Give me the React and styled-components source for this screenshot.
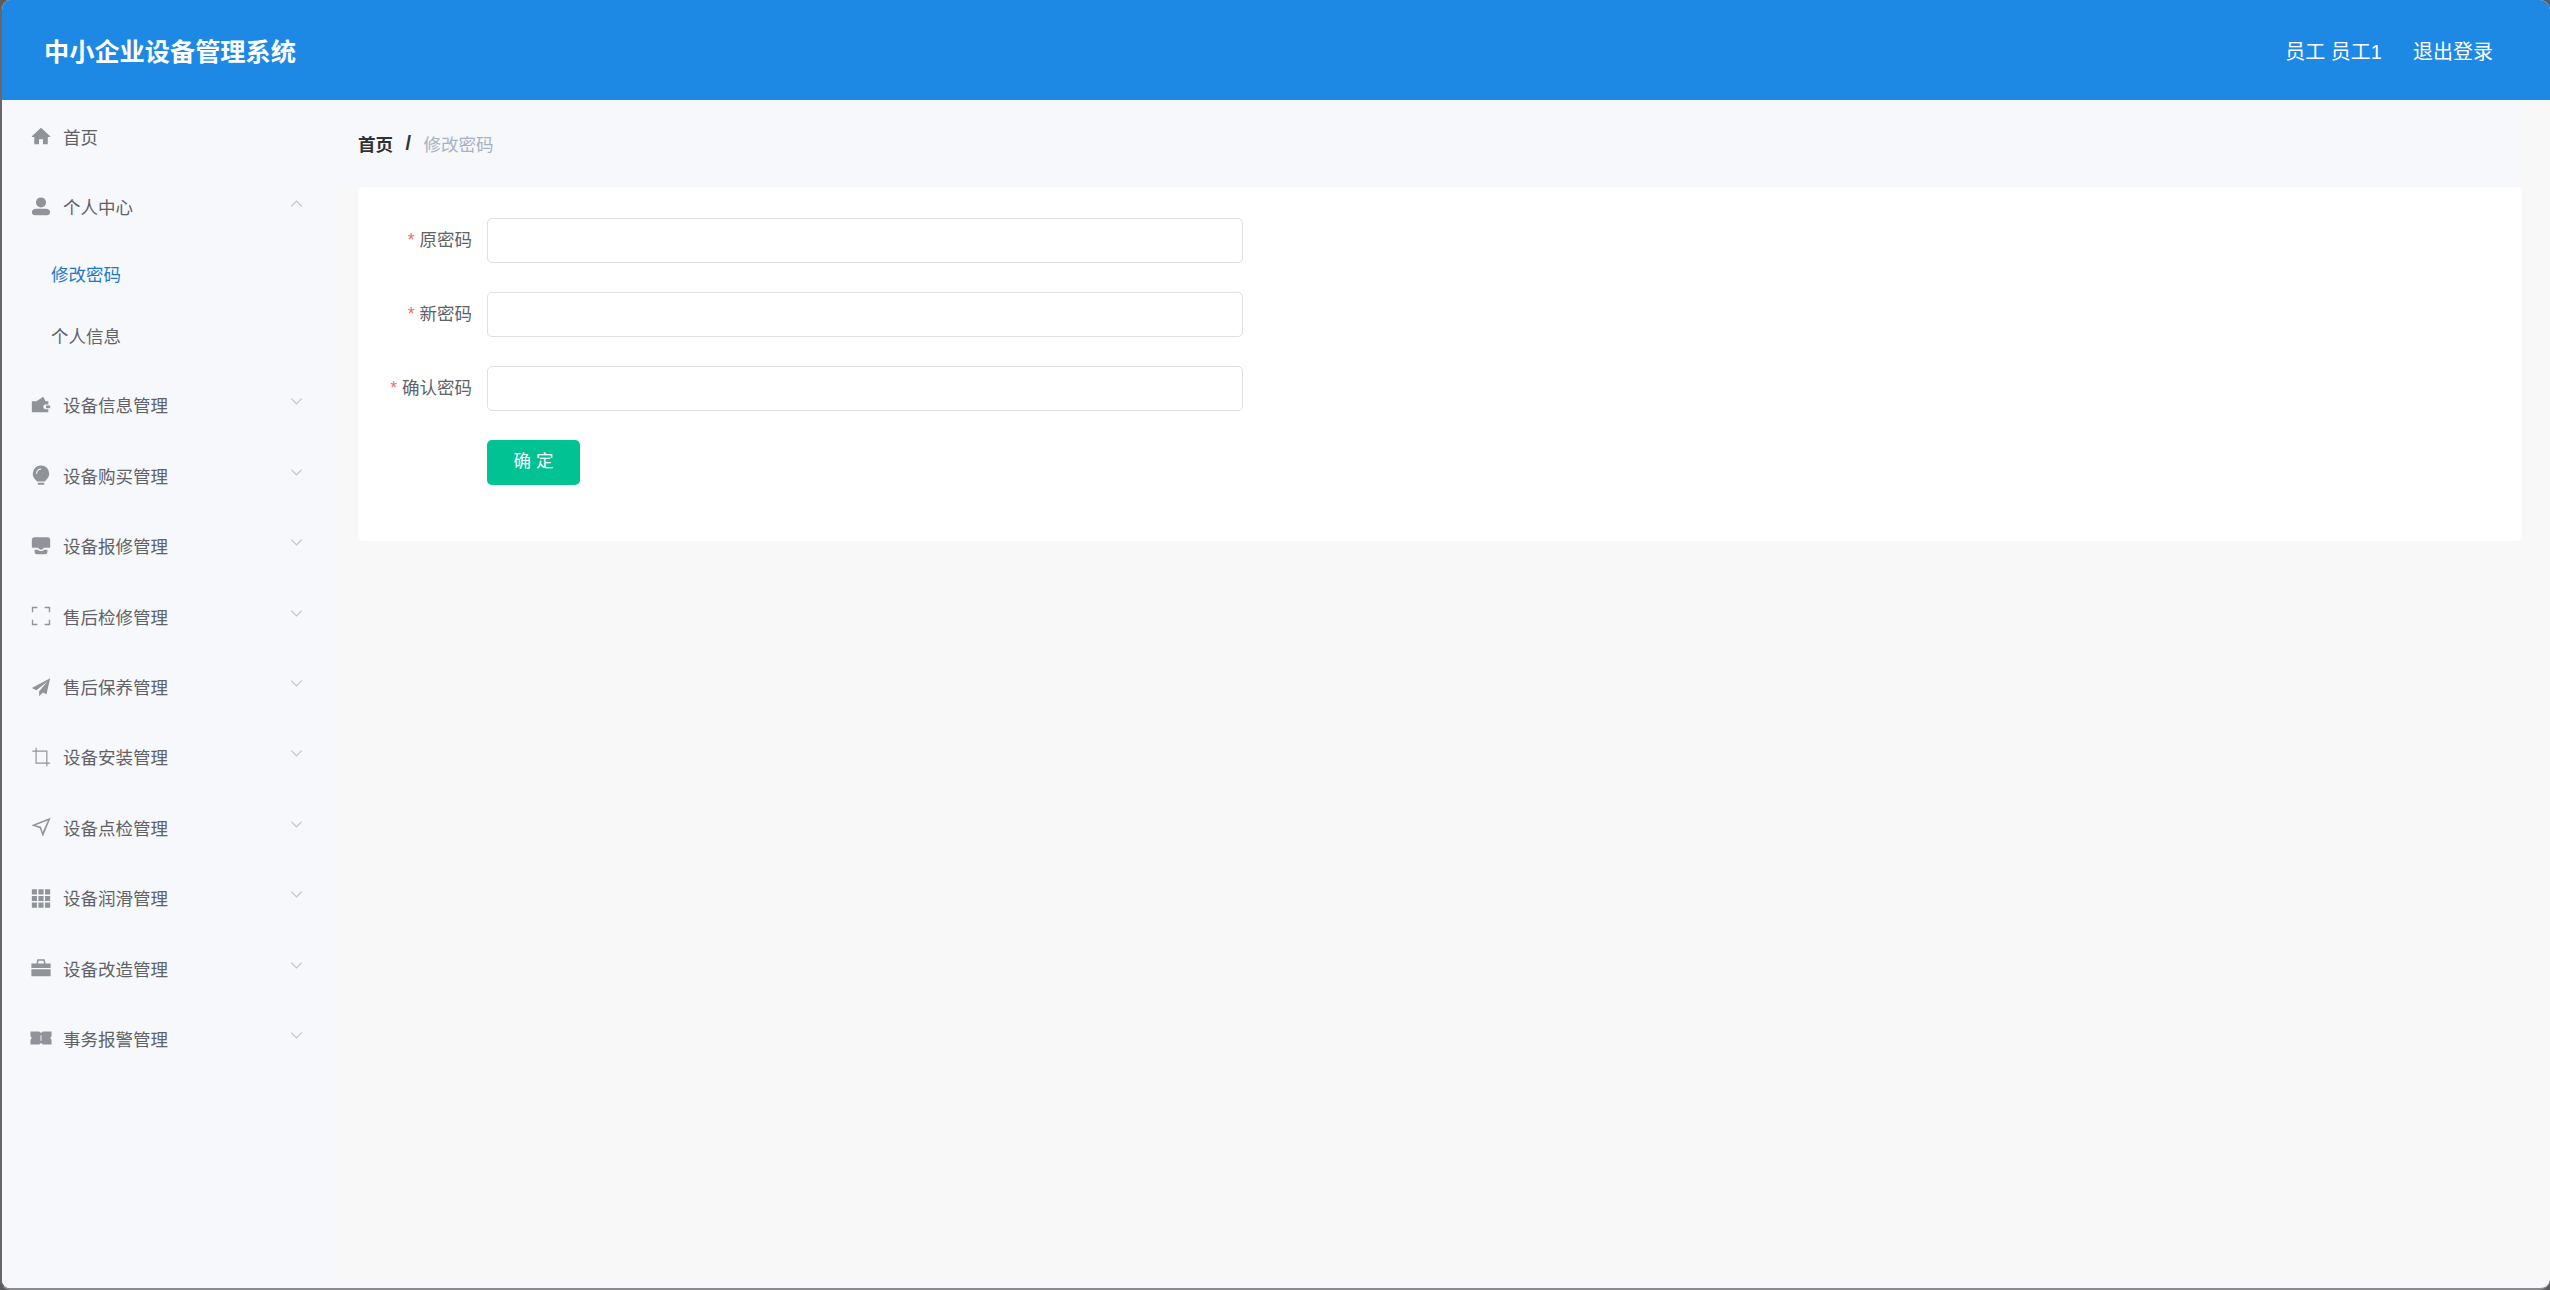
import React from 'react'
import styled, { createGlobalStyle } from 'styled-components'

const GlobalStyle = createGlobalStyle`
  html, body {
    margin: 0;
    background: #5b5b60;
    font-family: "Liberation Sans", "Noto Sans CJK SC", sans-serif;
  }
`

const Frame = styled.div`
  width: 2550px;
  height: 1290px;
  box-sizing: border-box;
  border-left: 2px solid #66666c;
  border-bottom: 2px solid #8a8a90;
  border-radius: 10px;
  overflow: hidden;
  background: #f8f8f8;
  display: flex;
  flex-direction: column;
`

const Header = styled.header`
  flex: 0 0 100px;
  background: #1e88e5;
  color: #fff;
  display: flex;
  align-items: center;
  justify-content: space-between;
  padding: 0 57px 0 42px;
`

const Title = styled.div`
  font-size: 25.2px;
  font-weight: 700;
`

const UserBar = styled.div`
  display: flex;
  gap: 31px;
  font-size: 20px;
`

const Body = styled.div`
  flex: 1;
  display: flex;
  min-height: 0;
`

const Sidebar = styled.nav`
  flex: 0 0 331px;
  background: #f7f8fc;
  padding-top: 1px;
`

const MenuRow = styled.div`
  height: 70.4px;
  display: flex;
  align-items: center;
  padding: 0 29px 0 28px;
  font-size: 17.5px;
  color: #606266;
`

const IconBox = styled.svg`
  width: 22px;
  height: 22px;
  margin-right: 11px;
  flex: none;
  fill: #909399;
`

const MenuText = styled.span`
  flex: 1;
`

const Arrow = styled.svg`
  width: 15px;
  height: 15px;
  margin-top: -6px;
  fill: none;
  stroke: #c0c4cc;
  stroke-width: 1.3;
  transform: ${({ $open }) => ($open ? 'rotate(180deg)' : 'none')};
`

const SubMenu = styled.div`
  padding-bottom: 3px;
`

const SubRow = styled.div`
  height: 62.5px;
  display: flex;
  align-items: center;
  padding-left: 49px;
  font-size: 17.5px;
  color: ${({ $active }) => ($active ? '#1e7ac8' : '#606266')};
`

const Main = styled.main`
  flex: 1;
  min-width: 0;
  padding-right: 28px;
`

const BreadcrumbBar = styled.div`
  height: 87px;
  background: #f7f8fb;
  display: flex;
  align-items: center;
  padding-left: 25px;
  font-size: 17.5px;
`

const Crumb = styled.span`
  font-weight: 700;
  color: #303133;
`

const Slash = styled.span`
  margin: 0 12.5px;
  font-size: 20px;
  font-weight: 700;
  color: #303133;
`

const CrumbCurrent = styled.span`
  color: #a8b0c4;
`

const Card = styled.section`
  margin-left: 25px;
  height: 354px;
  box-sizing: border-box;
  background: #fff;
  border-radius: 5px;
  padding: 31px 0 0 0;
`

const FormRow = styled.div`
  display: flex;
  align-items: center;
  height: 45px;
  margin-bottom: 29px;
`

const Label = styled.label`
  width: 129px;
  box-sizing: border-box;
  padding: 0 15px 5px 0;
  text-align: right;
  font-size: 17.5px;
  color: #606266;
`

const Star = styled.span`
  color: #f56c6c;
  margin-right: 5px;
`

const Input = styled.input`
  width: 756px;
  height: 45px;
  box-sizing: border-box;
  border: 1px solid #dcdfe6;
  border-radius: 5px;
  background: #fff;
  outline: none;
`

const SubmitButton = styled.button`
  margin-left: 129px;
  width: 93px;
  height: 45px;
  border: 0;
  border-radius: 5px;
  background: #00c292;
  color: #fff;
  font: inherit;
  font-size: 17.5px;
  padding: 0 0 7px 5px;
  letter-spacing: 5px;
`

const Hollow = styled.path`
  fill: #f7f8fc;
`

const icons = {
  home: <path d="M12 3 2 12.400V13h2.600v8h5.200v-5.400h4.400V21h5.200v-8H22v-.6z" />,
  user: <path d="M12 1.500a5.500 5.500 0 1 1 0 11 5.500 5.500 0 0 1 0-11zM6.500 14h11c2.600 0 4.500 1.700 4.500 3.800 0 2.200-1.700 3.200-3.300 3.200H5.300C3.700 21 2 20 2 17.800 2 15.700 3.900 14 6.500 14z" />,
  wallet: (
    <>
      <path d="M2 8h5l7.500-5 2.500 5h3v3.500h-3a2.500 2.500 0 0 0 0 5h3V20H2z" />
      <path d="M17.500 12.500H22v3h-4.500z" />
    </>
  ),
  bulb: (
    <>
      <path d="M12 1.500a9 9 0 0 1 9 9c0 3.400-2 5.400-3.700 7.200-.5.500-.6 1-.7 1.500H7.400c-.1-.5-.3-1-.8-1.500C4.600 15.800 3 14 3 10.500a9 9 0 0 1 9-9zM8.500 20.500h7V22.500h-7z" />
      <Hollow d="M12 5a5.500 5.500 0 0 0-5.500 5.500h1.300A4.200 4.200 0 0 1 12 6.300z" />
    </>
  ),
  shop: <path d="M5 2.500h14a3 3 0 0 1 3 3V14h-7c-.6 1.500-1.600 2-3 2s-2.400-.5-3-2H2V5.500a3 3 0 0 1 3-3zM5 16h3.500c.8 1 2 1.500 3.500 1.500s2.700-.5 3.500-1.500H19v2.500a2.500 2.500 0 0 1-2.500 2.500h-9A2.500 2.500 0 0 1 5 18.500z" />,
  full: <path d="M2 2h6v1.500H3.500V8H2zm14 0h6v6h-1.500V3.500H16zM2 16h1.500v4.500H8V22H2zm18.500 0H22v6h-6v-1.500h4.500z" />,
  send: <path d="M22 2.500 2 13l5 2.500L19 6l-9 10.500V22l4-4 4 2z" />,
  crop: <path d="M6 2h1.300v3H19v13h3v1.300h-3V22h-1.300v-2.700H6V6.300H2.500V5H6zm1.300 4.300v11.700h10.400V6.300z" />,
  position: <path d="M22.500 2 14 22.500l-3.300-9.200L1.500 10zm-3 3L6 10l6 1.800 1.800 6z" />,
  grid: <path d="M2 2.500h5.600v5.600H2zm7.200 0h5.600v5.600H9.200zm7.200 0H22v5.600h-5.600zM2 9.700h5.600v5.600H2zm7.200 0h5.600v5.600H9.200zm7.200 0H22v5.600h-5.600zM2 16.900h5.600v5.600H2zm7.200 0h5.600v5.600H9.200zm7.200 0H22v5.600h-5.600z" />,
  bag: <path d="M8 2.500h8l1 4.500h5.500v5h-21V7H7zm1.300 1.500L8.700 7h6.600l-.6-3zM1.500 13.300h21V21h-21z" />,
  ticket: (
    <>
      <path d="M.5 5H10l2 1.500L14 5h9.500v5L22 12l1.500 2v5H14l-2-1.500-2 1.500H.5v-5L2 12 .5 10z" />
      <Hollow d="M11.500 9h1v6h-1z" />
    </>
  ),
}

const menu = [
  { icon: 'wallet', label: '设备信息管理' },
  { icon: 'bulb', label: '设备购买管理' },
  { icon: 'shop', label: '设备报修管理' },
  { icon: 'full', label: '售后检修管理' },
  { icon: 'send', label: '售后保养管理' },
  { icon: 'crop', label: '设备安装管理' },
  { icon: 'position', label: '设备点检管理' },
  { icon: 'grid', label: '设备润滑管理' },
  { icon: 'bag', label: '设备改造管理' },
  { icon: 'ticket', label: '事务报警管理' },
]

const fields = ['原密码', '新密码', '确认密码']

const Icon = ({ name }) => <IconBox viewBox="0 0 24 24">{icons[name]}</IconBox>

const Chevron = ({ open }) => (
  <Arrow viewBox="0 0 16 16" $open={open}>
    <path d="M2.500 5 8 10.500 13.500 5" />
  </Arrow>
)

const App = () => (
  <Frame>
    <GlobalStyle />
    <Header>
      <Title>中小企业设备管理系统</Title>
      <UserBar>
        <span>员工 员工1</span>
        <span>退出登录</span>
      </UserBar>
    </Header>
    <Body>
      <Sidebar>
        <MenuRow>
          <Icon name="home" />
          <MenuText>首页</MenuText>
        </MenuRow>
        <MenuRow>
          <Icon name="user" />
          <MenuText>个人中心</MenuText>
          <Chevron open />
        </MenuRow>
        <SubMenu>
          <SubRow $active>修改密码</SubRow>
          <SubRow>个人信息</SubRow>
        </SubMenu>
        {menu.map(item => (
          <MenuRow key={item.label}>
            <Icon name={item.icon} />
            <MenuText>{item.label}</MenuText>
            <Chevron />
          </MenuRow>
        ))}
      </Sidebar>
      <Main>
        <BreadcrumbBar>
          <Crumb>首页</Crumb>
          <Slash>/</Slash>
          <CrumbCurrent>修改密码</CrumbCurrent>
        </BreadcrumbBar>
        <Card>
          {fields.map(field => (
            <FormRow key={field}>
              <Label><Star>*</Star>{field}</Label>
              <Input type="password" />
            </FormRow>
          ))}
          <SubmitButton>确定</SubmitButton>
        </Card>
      </Main>
    </Body>
  </Frame>
)

export default App
